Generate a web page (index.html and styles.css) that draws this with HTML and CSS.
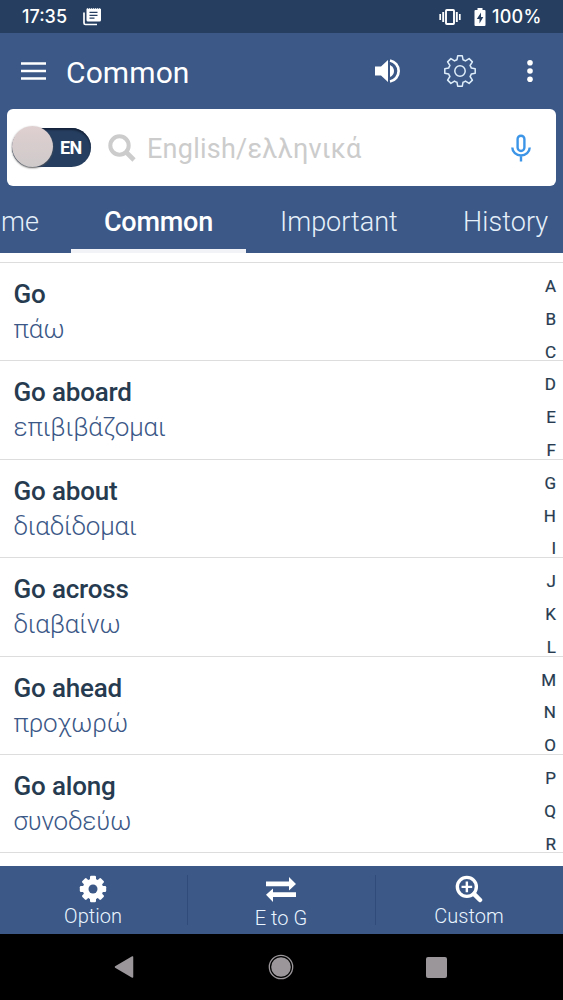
FILE: index.html
```html
<!DOCTYPE html>
<html lang="en">
<head>
<meta charset="utf-8">
<title>Common</title>
<link rel="stylesheet" href="styles.css">
</head>
<body>
<div class="phone">
  <div class="status">
    <span class="time">17:35</span>
    <svg class="news" width="18" height="18" viewBox="0 0 18 18"><path fill="#fff" fill-rule="evenodd" d="M2.500 0l1 1 1-1 1 1 1-1 1 1 1-1 1 1 1-1 1 1 1-1 1 1 1-1 1 1 1-1 1 1 .5-.5V12a1.500 1.500 0 0 1-1.500 1.500H5A1.500 1.500 0 0 1 3.500 12V1zM6.500 3.700V5h8V3.700zM6.500 6.700V8h8V6.700zM6.500 9.500V10.800h5V9.500z"/><path d="M1 4.500V15a1.500 1.500 0 0 0 1.500 1.500H14" fill="none" stroke="#fff" stroke-width="1.700"/></svg>
    <span class="grow"></span>
    <svg class="vibe" width="22" height="16" viewBox="0 0 22 16"><g fill="none" stroke="#fff"><rect x="7" y="1" width="8" height="14" rx=".8" stroke-width="1.900"/><path d="M4.200 3v10M17.800 3v10" stroke-width="1.900"/><path d="M1.200 5v6M20.800 5v6" stroke-width="1.700"/></g></svg>
    <svg class="batt" width="12" height="18" viewBox="0 0 12 18"><path fill="#fff" d="M3.500 0h5v2H10.500Q11.500 2 11.500 3V17Q11.500 18 10.500 18H1.500Q.5 18 .5 17V3Q.5 2 1.500 2H3.500z"/><path fill="#263f60" d="M7 4.500L2.800 11H5.500V15.500L9.300 9H7z"/></svg>
    <span class="pct">100%</span>
  </div>
  <header class="bar">
    <svg class="burger" width="25" height="18" viewBox="0 0 25 18"><path d="M0 1.500h25M0 9h25M0 16.500h25" stroke="#fff" stroke-width="2.500"/></svg>
    <h1 class="title">Common</h1>
    <svg class="sound" width="26" height="24" viewBox="0 0 26 24"><path fill="#fff" d="M0 7.500h6L13 1v22L6 16.500H0z"/><path fill="#fff" d="M15 6q4 2 4 6t-4 6z"/><path d="M15 1.500a10.700 10.700 0 0 1 0 21" fill="none" stroke="#fff" stroke-width="2.700"/></svg>
    <svg class="gear" width="34" height="34" viewBox="-17 -17 34 34"><g fill="none" stroke="#dfeefa" stroke-width="1.500" stroke-linejoin="round"><circle r="5.200"/><path d="M-2.300-15.200H2.300L3-11.300Q4.200-11 5.500-10.100L9.100-12.400L12.400-9.100L10.100-5.500Q11-4.200 11.300-3L15.200-2.300V2.300L11.300 3Q11 4.200 10.100 5.500L12.400 9.100L9.100 12.400L5.500 10.100Q4.200 11 3 11.300L2.300 15.200H-2.300L-3 11.300Q-4.200 11-5.500 10.100L-9.100 12.400L-12.400 9.100L-10.100 5.500Q-11 4.200-11.300 3L-15.200 2.300V-2.300L-11.300-3Q-11-4.200-10.100-5.500L-12.400-9.100L-9.100-12.400L-5.500-10.100Q-4.200-11-3-11.300Z"/></g></svg>
    <svg class="dots" width="6" height="24" viewBox="0 0 6 24"><g fill="#fff"><circle cx="3" cy="3.700" r="2.800"/><circle cx="3" cy="12" r="2.800"/><circle cx="3" cy="20.300" r="2.800"/></g></svg>
  </header>
  <div class="search">
    <div class="toggle"><span class="knob"></span><span class="lang">EN</span></div>
    <svg class="lens" width="28" height="28" viewBox="0 0 28 28"><g fill="none" stroke="#ccc"><circle cx="11.500" cy="11.500" r="9.200" stroke-width="4"/><path d="M18 18l8 8" stroke-width="4.600"/></g></svg>
    <span class="hint">English/ελληνικά</span>
    <svg class="mic" width="20" height="28" viewBox="0 0 20 28"><g fill="none" stroke="#3d95e8" stroke-width="2.400"><rect x="6.600" y="1.700" width="6.800" height="15.300" rx="3.400"/><path d="M1.300 13.500a8.700 8 0 0 0 17.400 0M10 21.500V27.500"/></g></svg>
  </div>
  <nav class="tabs">
    <span class="tab home">me</span><span class="tab on">Common</span><span class="tab important">Important</span><span class="tab history">History</span>
  </nav>
  <main class="content">
    <ul class="words">
      <li><b>Go</b><i>πάω</i></li>
      <li><b>Go aboard</b><i>επιβιβάζομαι</i></li>
      <li><b>Go about</b><i>διαδίδομαι</i></li>
      <li><b>Go across</b><i>διαβαίνω</i></li>
      <li><b>Go ahead</b><i>προχωρώ</i></li>
      <li><b>Go along</b><i>συνοδεύω</i></li>
    </ul>
    <div class="index"><span>A</span><span>B</span><span>C</span><span>D</span><span>E</span><span>F</span><span>G</span><span>H</span><span>I</span><span>J</span><span>K</span><span>L</span><span>M</span><span>N</span><span>O</span><span>P</span><span>Q</span><span>R</span></div>
  </main>
  <footer class="actions">
    <div class="action"><svg width="28" height="28" viewBox="-14 -14 28 28"><g fill="#fff"><circle r="10.300"/><g id="teeth"><rect x="-3" y="-13.200" width="6" height="26.400" rx="1.200"/><rect x="-13.200" y="-3" width="26.400" height="6" rx="1.200"/></g><use href="#teeth" transform="rotate(45)"/></g><circle r="4.500" fill="#3b5887"/></svg><span>Option</span></div>
    <div class="action mid"><svg width="32" height="28" viewBox="0 0 32 28"><path fill="#fff" d="M1 6.500H24V2L31 9L24 15.500V11.300H1zM31 22H8V27L1 19.700L8 13.500V17.300H31z"/></svg><span>E to G</span></div>
    <div class="action"><svg width="30" height="30" viewBox="0 0 30 30"><g fill="none" stroke="#fff"><circle cx="12.700" cy="12.700" r="10.200" stroke-width="3.600"/><path d="M20.500 20.500l6.300 6.300" stroke-width="4.800" stroke-linecap="round"/><path d="M12.700 7v11.400M7 12.700h11.400" stroke-width="2.600"/></g></svg><span>Custom</span></div>
  </footer>
  <div class="sysnav">
    <svg class="back" width="20" height="24" viewBox="0 0 20 24"><path d="M18.500 2v20L1.500 12z" fill="#9a969a" stroke="#9a969a" stroke-width="1.500" stroke-linejoin="round"/></svg>
    <svg class="home-key" width="26" height="26" viewBox="0 0 26 26"><circle cx="13" cy="13" r="11.700" fill="none" stroke="#9a969a" stroke-width="1.300"/><circle cx="13" cy="13" r="9.800" fill="#9a969a"/></svg>
    <span class="recent"></span>
  </div>
</div>
</body>
</html>
```
FILE: styles.css
```css
* { box-sizing: border-box; }
body { margin: 0; font-family: Roboto, "Noto Sans", sans-serif; }
.phone { width: 563px; height: 1000px; display: flex; flex-direction: column; overflow: hidden; background: #fff; }
svg { display: block; flex: none; }
.status { height: 33px; flex: none; background: #263f60; color: #fff; display: flex; align-items: center; padding: 0 22px; font: 500 18px/33px Inter, sans-serif; }
.time { width: 61px; }
.grow { flex: 1; }
.vibe { margin-right: 13px; }
.batt { margin-right: 6px; }
.pct { width: 49px; white-space: nowrap; letter-spacing: .25px; }
.bar { height: 76px; flex: none; background: #3b5887; display: flex; align-items: center; padding: 0 30px 0 21px; }
.title { margin: 3px 0 0 20px; flex: 1; color: #fff; font: 400 30px/36px Roboto, sans-serif; letter-spacing: .1px; }
.sound { margin-right: 42px; }
.gear { margin-right: 50px; }
.search { height: 77px; flex: none; background: #fff; border-radius: 6px; margin: 0 7px; display: flex; align-items: center; padding: 0 25px 0 5px; box-shadow: 0 0 0 20px #3b5887; position: relative; z-index: 0; }
.bar, .tabs { position: relative; z-index: 1; }
.toggle { width: 79px; height: 39px; border-radius: 20px; background: #263f60; position: relative; box-shadow: inset 0 2px 2px #142239; }
.knob { position: absolute; left: 0; top: -2px; width: 41px; height: 41px; border-radius: 50%; background: linear-gradient(#dfcfd0, #cfcaca); box-shadow: 0 1px 2px #555; }
.lang { position: absolute; left: 48px; top: 9px; color: #fff; font: 700 18px/22px Roboto, sans-serif; letter-spacing: -.7px; }
.lens { margin-left: 17px; }
.hint { margin-left: 11px; flex: 1; color: #ccc; font-size: 27px; line-height: 36px; padding-top: 3px; letter-spacing: .25px; }
.tabs { height: 67px; flex: none; background: #3b5887; color: #e6f0fa; display: flex; font-size: 27px; font-weight: 300; line-height: 72px; white-space: nowrap; }
.home { width: 71px; display: flex; justify-content: flex-end; padding-right: 32px; }
.on { width: 175px; text-align: center; border-bottom: 4px solid #f2f3f6; color: #fff; font-weight: 500; letter-spacing: -.2px; }
.important { padding-left: 34px; width: 217px; }
.history { letter-spacing: .1px; }
.content { flex: 1; display: flex; min-height: 0; position: relative; background: #fff; padding-top: 9px; }
.words { margin: 0; padding: 0; list-style: none; flex: 1; border-top: 1.500px solid #ddd; }
.words li { height: 98.400px; border-bottom: 1.500px solid #ddd; padding: 14px 0 0 13.500px; display: flex; flex-direction: column; }
.words b { font-size: 26px; line-height: 35px; font-weight: 500; color: #273b50; letter-spacing: -.18px; }
.words i { font-size: 26px; line-height: 35px; font-weight: 300; font-style: normal; color: #3b5887; letter-spacing: -.2px; }
.index { position: absolute; right: 7px; top: 17px; display: flex; flex-direction: column; align-items: flex-end; font-size: 17px; line-height: 32.800px; font-weight: 400; color: #273b50; -webkit-text-stroke: .2px #273b50; }
.actions { height: 68px; flex: none; background: #3b5887; display: flex; padding-top: 9px; }
.action { flex: 1; height: 50px; display: flex; flex-direction: column; align-items: center; color: #eaf5ff; font-size: 20px; font-weight: 300; line-height: 26px; padding-right: 1px; }
.action svg { height: 28px; }
.mid { border-left: 1px solid #304b79; border-right: 1px solid #304b79; }
.mid span { padding-top: 2px; }
.sysnav { height: 66px; flex: none; background: #000; display: flex; align-items: center; padding-left: 114px; }
.home-key { margin-left: 134px; }
.recent { margin-left: 132px; width: 21px; height: 21px; border-radius: 2px; background: #9a969a; }
```
